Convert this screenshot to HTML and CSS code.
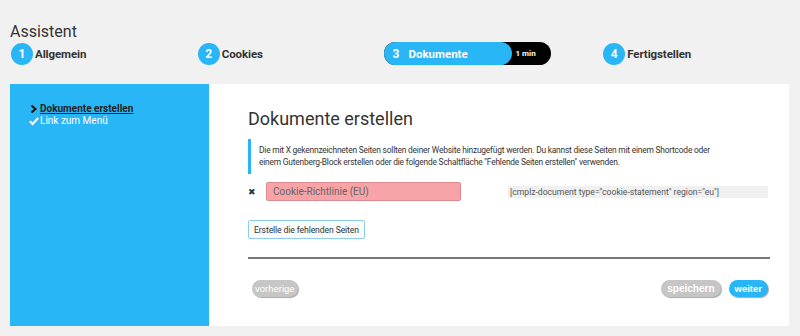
FILE: index.html
```html
<!DOCTYPE html>
<html lang="de">
<head>
    <meta charset="UTF-8">
    <meta name="viewport" content="width=device-width, initial-scale=1.0">
    <title>Assistent</title>
    <link rel="stylesheet" href="styles.css">
</head>
<body>
    <div class="wizard">
        <h1 class="wizard-title">Assistent</h1>
        <div class="steps">
            <div class="step">
                <span class="step-num">1</span>
                <span class="step-label">Allgemein</span>
            </div>
            <div class="step">
                <span class="step-num">2</span>
                <span class="step-label">Cookies</span>
            </div>
            <div class="step step-active">
                <div class="active-pill">
                    <div class="active-main">
                        <span class="active-num">3</span>
                        <span class="active-label">Dokumente</span>
                    </div>
                    <span class="active-time">1 min</span>
                </div>
            </div>
            <div class="step">
                <span class="step-num">4</span>
                <span class="step-label">Fertigstellen</span>
            </div>
        </div>

        <div class="panel">
            <div class="sidebar">
                <div class="menu-item current">
                    <svg class="menu-icon" viewBox="0 0 10 10" width="10" height="10">
                        <path d="M2.5 1.5 L6.5 5 L2.5 8.5" fill="none" stroke="#111" stroke-width="2"/>
                    </svg>
                    <a href="#">Dokumente erstellen</a>
                </div>
                <div class="menu-item">
                    <svg class="menu-icon" viewBox="0 0 10 10" width="10" height="10">
                        <path d="M0.8 5.2 L3.6 8 L9.2 2" fill="none" stroke="#fff" stroke-width="2"/>
                    </svg>
                    <span>Link zum Menü</span>
                </div>
            </div>

            <div class="content">
                <h2>Dokumente erstellen</h2>
                <div class="notice">
                    <p>Die mit X gekennzeichneten Seiten sollten deiner Website hinzugefügt werden. Du kannst diese Seiten mit einem Shortcode oder einem Gutenberg-Block erstellen oder die folgende Schaltfläche "Fehlende Seiten erstellen" verwenden.</p>
                </div>

                <div class="doc-row">
                    <span class="doc-status">&#x2716;</span>
                    <input class="doc-title" type="text" value="Cookie-Richtlinie (EU)">
                    <code class="doc-shortcode">[cmplz-document type="cookie-statement" region="eu"]</code>
                </div>

                <button class="create-btn" type="button">Erstelle die fehlenden Seiten</button>

                <div class="footer">
                    <button class="pill-btn grey narrow" type="button">vorherige</button>
                    <div class="footer-right">
                        <button class="pill-btn grey wide" type="button">speichern</button>
                        <button class="pill-btn blue" type="button">weiter</button>
                    </div>
                </div>
            </div>
        </div>
    </div>
</body>
</html>
```

FILE: styles.css
```css
body {
    margin: 0;
    font-family: Roboto, 'Liberation Sans', sans-serif;
    background-color: #f1f1f1;
    color: #333;
}
.wizard {
    padding: 21px 11px 0 10px;
}
.wizard-title {
    margin: 0;
    font-size: 16px;
    font-weight: 400;
    line-height: 21px;
    color: #333;
}
.steps {
    display: flex;
    align-items: center;
    height: 23px;
}
.step {
    display: flex;
    align-items: center;
    width: 187px;
}
.step-active {
    width: 219px;
}
.step-num {
    width: 22px;
    height: 22px;
    border-radius: 50%;
    background-color: #29b6f6;
    color: #fff;
    font-size: 12px;
    font-weight: 700;
    display: flex;
    align-items: center;
    justify-content: center;
    margin-left: 1px;
}
.step-label {
    margin-left: 2px;
    font-size: 11.5px;
    font-weight: 700;
    color: #333;
    letter-spacing: -0.1px;
}
.active-pill {
    display: flex;
    align-items: center;
    width: 167px;
    height: 23px;
    border-radius: 12px;
    background-color: #000;
}
.active-main {
    display: flex;
    align-items: center;
    width: 128px;
    height: 23px;
    border-radius: 12px;
    background-color: #29b6f6;
    color: #fff;
    font-weight: 700;
    box-sizing: border-box;
    padding-left: 9px;
}
.active-num {
    font-size: 12px;
    margin-right: 9px;
}
.active-label {
    font-size: 11.5px;
}
.active-time {
    margin-left: 4px;
    color: #fff;
    font-size: 8px;
    font-weight: 700;
}
.panel {
    display: flex;
    margin-top: 19px;
    height: 242px;
    background-color: #fff;
}
.sidebar {
    width: 199px;
    flex-shrink: 0;
    background-color: #29b6f6;
    padding: 19px 0 0 19px;
    box-sizing: border-box;
}
.menu-item {
    display: flex;
    align-items: center;
    gap: 1px;
    font-size: 10px;
    line-height: 12px;
    color: #fff;
}
.menu-item.current a {
    color: #222;
    font-weight: 700;
    text-decoration: underline;
}
.menu-icon {
    flex-shrink: 0;
}
.content {
    flex: 1;
    padding: 24px 19px 0 39px;
}
.content h2 {
    margin: 0 0 9px 0;
    font-size: 18px;
    font-weight: 400;
    line-height: 22px;
    color: #333;
}
.notice {
    border-left: 3px solid #29b6f6;
    padding: 6px 0 6px 8px;
    font-size: 8.4px;
    line-height: 11.5px;
    letter-spacing: -0.2px;
    color: #333;
}
.notice p {
    margin: 0;
    max-width: 456px;
}
.doc-row {
    display: flex;
    align-items: center;
    margin-top: 8px;
}
.doc-status {
    width: 18px;
    font-size: 9px;
    color: #333;
}
.doc-title {
    width: 195px;
    height: 19px;
    box-sizing: border-box;
    padding: 0 6px;
    border: 1px solid #e08a90;
    border-radius: 2px;
    background-color: #f8a3a8;
    font-family: Roboto, 'Liberation Sans', sans-serif;
    font-size: 10px;
    color: #666;
}
.doc-shortcode {
    margin-left: 47px;
    width: 258px;
    background-color: #f0f0f0;
    font-family: Roboto, 'Liberation Sans', sans-serif;
    font-size: 8.6px;
    line-height: 12px;
    color: #555;
    padding-left: 2px;
}
.create-btn {
    display: block;
    margin-top: 19px;
    height: 19px;
    padding: 0 5px;
    border: 1px solid #8fcdee;
    border-radius: 2px;
    background-color: #f7fbfd;
    font-family: Roboto, 'Liberation Sans', sans-serif;
    font-size: 8.6px;
    letter-spacing: -0.1px;
    color: #333;
}
.footer {
    display: flex;
    justify-content: space-between;
    align-items: center;
    margin-top: 18px;
    padding: 21px 2px 0 4px;
    border-top: 2px solid #777;
}
.footer-right {
    display: flex;
    gap: 8px;
}
.pill-btn {
    height: 17px;
    padding: 0 4px;
    border: none;
    border-radius: 9px;
    font-family: 'Liberation Sans', Arial, sans-serif;
    font-size: 9.5px;
    font-weight: 700;
    color: #fff;
    box-shadow: 1px 1px 1px rgba(0,0,0,0.35);
}
.pill-btn.grey {
    background-color: #c6c6c6;
}
.pill-btn.narrow {
    padding: 0 3px;
    font-weight: 400;
}
.pill-btn.wide {
    padding: 0 6px;
    font-size: 10px;
}
.pill-btn.blue {
    background-color: #29b6f6;
    padding: 0 6px;
}
```
